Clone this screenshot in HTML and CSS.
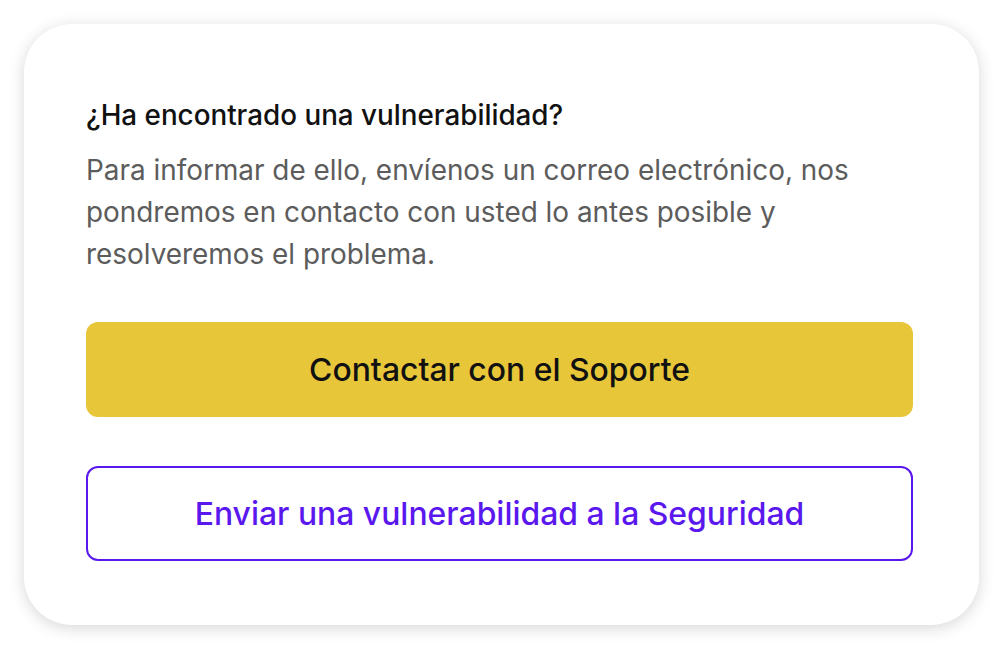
FILE: index.html
```html
<!DOCTYPE html>
<html lang="es">
<head>
    <meta charset="UTF-8">
    <title>Vulnerabilidad</title>
    <link rel="stylesheet" href="styles.css">
</head>
<body>
    <div class="card">
        <h2 class="title">¿Ha encontrado una vulnerabilidad?</h2>
        <p class="text">Para informar de ello, envíenos un correo electrónico, nos pondremos en contacto con usted lo antes posible y resolveremos el problema.</p>
        <div class="actions">
            <button class="btn btn-primary">Contactar con el Soporte</button>
            <button class="btn btn-outline">Enviar una vulnerabilidad a la Seguridad</button>
        </div>
    </div>
</body>
</html>
```

FILE: styles.css
```css
html, body {
    margin: 0;
    background-color: #fff;
}
body {
    font-family: 'Inter', 'Noto Sans', sans-serif;
    padding: 24px 25px 24px 24px;
}
.card {
    width: 955px;
    box-sizing: border-box;
    background-color: #fff;
    border-radius: 48px;
    box-shadow: 0 3px 16px rgba(0, 0, 0, 0.16);
    padding: 75px 66px 64px 62px;
}
.title {
    margin: 0;
    font-size: 27.8px;
    line-height: 32px;
    font-weight: 500;
    color: #111;
}
.text {
    margin: 18px 0 0;
    font-size: 27.9px;
    line-height: 42px;
    font-weight: 400;
    color: #5c5c5c;
}
.actions {
    display: flex;
    flex-direction: column;
    gap: 49px;
    margin-top: 47px;
}
.btn {
    height: 95px;
    border-radius: 12px;
    font-family: inherit;
    font-size: 31.9px;
    font-weight: 500;
    cursor: pointer;
}
.btn-primary {
    background-color: #e8c63a;
    border: none;
    color: #111;
}
.btn-outline {
    background-color: #fff;
    border: 2px solid #5a18ee;
    color: #5a18ee;
}
```
